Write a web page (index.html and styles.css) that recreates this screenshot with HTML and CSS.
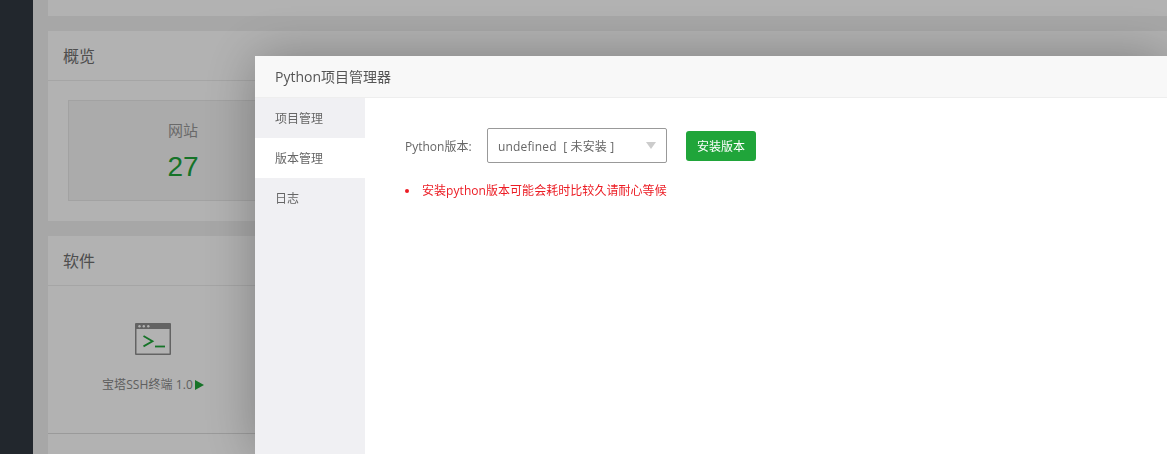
FILE: index.html
```html
<!DOCTYPE html>
<html lang="zh-CN">
<head>
  <meta charset="UTF-8" />
  <title>Python项目管理器</title>
  <link rel="stylesheet" href="styles.css">
</head>
<body>
  <div class="sidebar"></div>
  <div class="main">
    <div class="card card-top"></div>

    <div class="card">
      <div class="card-title">概览</div>
      <div class="overview">
        <div class="stat">
          <div class="stat-name">网站</div>
          <div class="stat-num">27</div>
        </div>
      </div>
    </div>

    <div class="card">
      <div class="card-title">软件</div>
      <div class="soft-list">
        <div class="soft">
          <svg class="soft-icon" width="36" height="32" viewBox="0 0 36 32">
            <rect x="0" y="0" width="36" height="32" rx="1" fill="#8f8f8f"/>
            <rect x="1.5" y="6" width="33" height="24.5" fill="#fff"/>
            <circle cx="4.5" cy="3.2" r="1.2" fill="#fff"/>
            <circle cx="8.8" cy="3.2" r="1.2" fill="#fff"/>
            <circle cx="13.3" cy="3.2" r="1.2" fill="#fff"/>
            <path d="M8.5 13l9 5.2-9 5.2" fill="none" stroke="#20a53a" stroke-width="1.8"/>
            <path d="M20 23.5h10" fill="none" stroke="#20a53a" stroke-width="1.8"/>
          </svg>
          <div class="soft-name">宝塔SSH终端 1.0<span class="soft-play"></span></div>
        </div>
      </div>
    </div>
  </div>

  <div class="shade"></div>

  <div class="modal">
    <div class="modal-title">Python项目管理器</div>
    <div class="modal-body">
      <ul class="menu">
        <li>项目管理</li>
        <li class="on">版本管理</li>
        <li>日志</li>
      </ul>
      <div class="content">
        <div class="form-row">
          <span class="form-label">Python版本:</span>
          <div class="select">
            <span>undefined&nbsp; [ 未安装 ]</span>
            <span class="caret"></span>
          </div>
          <button class="btn">安装版本</button>
        </div>
        <ul class="tips">
          <li>安装python版本可能会耗时比较久请耐心等候</li>
        </ul>
      </div>
    </div>
  </div>
</body>
</html>
```

FILE: styles.css
```css
* {
  box-sizing: border-box;
}
body {
  margin: 0;
  height: 454px;
  overflow: hidden;
  display: flex;
  font-family: "Open Sans", "Noto Sans CJK SC", sans-serif;
  font-size: 12px;
  color: #666;
  background: #f0f0f0;
}
.sidebar {
  width: 33px;
  flex-shrink: 0;
  background: #323841;
}
.main {
  flex: 1;
  height: 454px;
  padding-left: 15px;
}
.card {
  background: #fff;
  margin-bottom: 15px;
}
.card-top {
  height: 16px;
}
.card:nth-child(2) {
  height: 190px;
}
.card:nth-child(3) {
  height: 218px;
  margin-bottom: 0;
}
.card-title {
  height: 50px;
  padding-left: 15px;
  line-height: 50px;
  font-size: 16px;
  color: #707070;
  border-bottom: 1px solid #ececec;
}
.overview {
  padding: 19px 20px;
}
.stat {
  width: 230px;
  height: 101px;
  padding-top: 18px;
  text-align: center;
  background: #f5f5f5;
  border: 1px solid #e8e8e8;
}
.stat-name {
  font-size: 15px;
  line-height: 22px;
  color: #999;
}
.stat-num {
  margin-top: 10px;
  font-family: "Liberation Sans", sans-serif;
  font-size: 28px;
  line-height: 32px;
  color: #20a53a;
}
.soft-list {
  height: 148px;
  border-bottom: 1px solid #ddd;
}
.soft {
  width: 210px;
  padding-top: 37px;
  text-align: center;
}
.soft-icon {
  display: block;
  margin: 0 auto;
}
.soft-name {
  margin-top: 20px;
  line-height: 20px;
  letter-spacing: 0.1px;
  color: #888;
}
.soft-play {
  display: inline-block;
  margin-left: 2px;
  border-left: 9px solid #20a53a;
  border-top: 5px solid transparent;
  border-bottom: 5px solid transparent;
  vertical-align: -1px;
}
.shade {
  position: fixed;
  top: 0;
  left: 0;
  right: 0;
  bottom: 0;
  background: rgba(0, 0, 0, 0.3);
}
.modal {
  position: fixed;
  top: 56px;
  left: 255px;
  right: 0;
  bottom: 0;
  display: flex;
  flex-direction: column;
  background: #fff;
  box-shadow: 1px 1px 50px rgba(0, 0, 0, 0.3);
}
.modal-title {
  height: 42px;
  flex-shrink: 0;
  padding-left: 20px;
  line-height: 42px;
  font-size: 14px;
  color: #555;
  background: #f8f8f8;
  border-bottom: 1px solid #eee;
}
.modal-body {
  display: flex;
  flex: 1;
}
.menu {
  width: 110px;
  margin: 0;
  padding: 0;
  list-style: none;
  background: #f0f0f3;
}
.menu li {
  height: 40px;
  padding-left: 20px;
  line-height: 42px;
}
.menu li.on {
  background: #fff;
}
.content {
  flex: 1;
  padding: 30px 40px;
}
.form-row {
  display: flex;
  align-items: center;
  height: 35px;
}
.form-label {
  width: 82px;
}
.select {
  display: flex;
  align-items: center;
  justify-content: space-between;
  width: 180px;
  height: 35px;
  padding: 0 10px;
  letter-spacing: 0.15px;
  border: 1px solid #999;
  border-radius: 2px;
}
.caret {
  margin-bottom: 1px;
  border-top: 7px solid #ccc;
  border-left: 5px solid transparent;
  border-right: 5px solid transparent;
}
.btn {
  width: 70px;
  height: 30px;
  margin-left: 19px;
  padding: 0;
  font: inherit;
  color: #fff;
  background: #20a53a;
  border: none;
  border-radius: 3px;
}
.tips {
  margin: 18px 0 0;
  padding: 0;
  list-style: none;
  color: #ec1c24;
  letter-spacing: 0.05px;
}
.tips li {
  display: flex;
  align-items: center;
  line-height: 20px;
}
.tips li::before {
  content: "";
  width: 4px;
  height: 4px;
  margin-right: 13px;
  border-radius: 50%;
  background: #ec1c24;
}
```
